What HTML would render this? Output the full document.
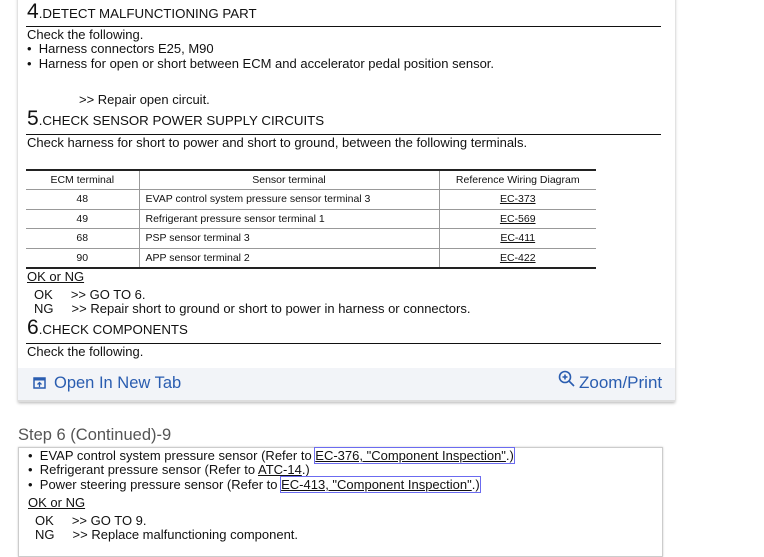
<!DOCTYPE html>
<html><head><meta charset="utf-8"><style>
*{margin:0;padding:0;box-sizing:border-box}
body{width:764px;height:545px;background:#fff;font-family:"Liberation Sans",sans-serif;color:#111;position:relative;overflow:hidden}
.a{position:absolute;white-space:nowrap;font-size:13px;line-height:14px}
.card{position:absolute;left:18px;top:-5px;width:657px;height:407px;background:#fff;box-shadow:0 1px 3px rgba(0,0,0,.3)}
.foot{position:absolute;left:18px;top:368px;width:657px;height:34px;background:#f2f4f8;border-bottom:2px solid #ddd}
.ln{position:absolute;left:26px;width:635px;height:1px;background:#111}
.h{font-size:13.3px}
.h b{font-weight:normal;font-size:21px}
table{position:absolute;left:26px;top:169px;width:570px;border-collapse:collapse;font-size:10.5px;border-top:2px solid #222;border-bottom:2px solid #222}
td{border-bottom:1px solid #999;height:19.5px;padding:0 6px}
td+td{border-left:1px solid #999}
.c{text-align:center}
u{text-decoration:underline}
.bx{position:absolute;left:18px;top:447px;width:645px;height:110px;border:1px solid #ccc;box-shadow:0 0 2px rgba(0,0,0,.2)}
.lk{outline:1px solid #6b6bf0}
</style></head><body>
<div class="card"></div>
<div class="foot"></div>
<div class="a h" style="left:27px;top:2px;line-height:20px"><b>4</b>.DETECT MALFUNCTIONING PART</div>
<div class="ln" style="top:26px"></div>
<div class="a" style="left:27px;top:28px">Check the following.</div>
<div class="a" style="left:27px;top:42px">• &nbsp;Harness connectors E25, M90</div>
<div class="a" style="left:27px;top:57px">• &nbsp;Harness for open or short between ECM and accelerator pedal position sensor.</div>
<div class="a" style="left:79px;top:93px">&gt;&gt; Repair open circuit.</div>
<div class="a h" style="left:27px;top:109px;line-height:20px"><b>5</b>.CHECK SENSOR POWER SUPPLY CIRCUITS</div>
<div class="ln" style="top:134px"></div>
<div class="a" style="left:27px;top:136px">Check harness for short to power and short to ground, between the following terminals.</div>
<table>
<tr><td class="c" style="width:113px;height:18px">ECM terminal</td><td class="c" style="width:300px">Sensor terminal</td><td class="c">Reference Wiring Diagram</td></tr>
<tr><td class="c">48</td><td>EVAP control system pressure sensor terminal 3</td><td class="c"><u>EC-373</u></td></tr>
<tr><td class="c">49</td><td>Refrigerant pressure sensor terminal 1</td><td class="c"><u>EC-569</u></td></tr>
<tr><td class="c">68</td><td>PSP sensor terminal 3</td><td class="c"><u>EC-411</u></td></tr>
<tr><td class="c" style="border-bottom:0">90</td><td style="border-bottom:0">APP sensor terminal 2</td><td class="c" style="border-bottom:0"><u>EC-422</u></td></tr>
</table>
<div class="a" style="left:27px;top:270px"><u>OK or NG</u></div>
<div class="a" style="left:34px;top:288px">OK &nbsp;&nbsp;&nbsp;&nbsp;&gt;&gt; GO TO 6.</div>
<div class="a" style="left:34px;top:302px">NG &nbsp;&nbsp;&nbsp;&nbsp;&gt;&gt; Repair short to ground or short to power in harness or connectors.</div>
<div class="a h" style="left:27px;top:318px;line-height:20px"><b>6</b>.CHECK COMPONENTS</div>
<div class="ln" style="top:343px"></div>
<div class="a" style="left:27px;top:345px">Check the following.</div>
<svg style="position:absolute;left:33px;top:377px" width="13" height="12" viewBox="0 0 13 12"><rect x="1" y="1" width="11" height="10" fill="none" stroke="#2a5db0" stroke-width="1.5"/><rect x="1" y="1" width="11" height="2.5" fill="#2a5db0"/><path d="M6.5 10V5.5M4.5 7.5l2-2 2 2" stroke="#2a5db0" stroke-width="1.3" fill="none"/></svg>
<div class="a" style="left:54px;top:374px;font-size:16.5px;line-height:18px;color:#2a5db0">Open In New Tab</div>
<svg style="position:absolute;left:557px;top:369px" width="20" height="20" viewBox="0 0 20 20"><circle cx="8" cy="8" r="5.5" fill="none" stroke="#2a5db0" stroke-width="1.6"/><path d="M12 12l5 5M8 5.5v5M5.5 8h5" stroke="#2a5db0" stroke-width="1.6"/></svg>
<div class="a" style="left:579px;top:374px;font-size:17px;line-height:18px;color:#2a5db0">Zoom/Print</div>
<div class="a" style="left:18px;top:426px;font-size:16.5px;line-height:18px;color:#555">Step 6 (Continued)-9</div>
<div class="bx"></div>
<div class="a" style="left:28px;top:449px">• &nbsp;EVAP control system pressure sensor (Refer to <span class="lk"><u>EC-376, "Component Inspection"</u>.)</span></div>
<div class="a" style="left:28px;top:463px">• &nbsp;Refrigerant pressure sensor (Refer to <u>ATC-14</u>.)</div>
<div class="a" style="left:28px;top:478px">• &nbsp;Power steering pressure sensor (Refer to <span class="lk"><u>EC-413, "Component Inspection"</u>.)</span></div>
<div class="a" style="left:28px;top:496px"><u>OK or NG</u></div>
<div class="a" style="left:35px;top:514px">OK &nbsp;&nbsp;&nbsp;&nbsp;&gt;&gt; GO TO 9.</div>
<div class="a" style="left:35px;top:528px">NG &nbsp;&nbsp;&nbsp;&nbsp;&gt;&gt; Replace malfunctioning component.</div>
</body></html>
